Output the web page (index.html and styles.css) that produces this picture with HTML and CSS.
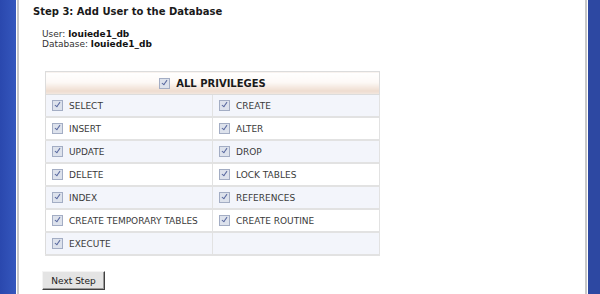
FILE: index.html
```html
<!DOCTYPE html>
<html>
<head>
<meta charset="utf-8">
<link rel="stylesheet" href="styles.css">
</head>
<body>
<div class="frame">
  <div class="side side-left"></div>
  <div class="content">
    <h1 class="title">Step 3: Add User to the Database</h1>
    <div class="info">
      <div>User: <b>louiede1_db</b></div>
      <div>Database: <b>louiede1_db</b></div>
    </div>
    <table class="privs">
      <thead>
        <tr><th colspan="2"><span class="cb"></span>ALL PRIVILEGES</th></tr>
      </thead>
      <tbody>
        <tr class="alt"><td><span class="cb"></span>SELECT</td><td><span class="cb"></span>CREATE</td></tr>
        <tr><td><span class="cb"></span>INSERT</td><td><span class="cb"></span>ALTER</td></tr>
        <tr class="alt"><td><span class="cb"></span>UPDATE</td><td><span class="cb"></span>DROP</td></tr>
        <tr><td><span class="cb"></span>DELETE</td><td><span class="cb"></span>LOCK TABLES</td></tr>
        <tr class="alt"><td><span class="cb"></span>INDEX</td><td><span class="cb"></span>REFERENCES</td></tr>
        <tr><td><span class="cb"></span>CREATE TEMPORARY TABLES</td><td><span class="cb"></span>CREATE ROUTINE</td></tr>
        <tr class="alt"><td><span class="cb"></span>EXECUTE</td><td></td></tr>
      </tbody>
    </table>
    <button class="btn" type="button">Next Step</button>
  </div>
  <div class="side side-right"></div>
</div>
</body>
</html>
```
FILE: styles.css
```css
html, body {
  margin: 0;
  padding: 0;
  background: #fff;
}
body {
  font-family: "DejaVu Sans", Verdana, sans-serif;
  color: #222;
}
.frame {
  display: flex;
  height: 294px;
  overflow: hidden;
}
.side-left {
  width: 16px;
  background: linear-gradient(to right, #2a48ae, #3557bd);
  border-right: 1px solid #fff;
}
.side-right {
  width: 12px;
  background: #2d48a2;
  border-left: 1px solid #fff;
}
.content {
  flex: 1;
  border-left: 2px solid #c8c8c8;
  border-right: 2px solid #c8c8c8;
  padding-left: 14px;
}
.title {
  margin: 5px 0 0;
  font-size: 10px;
  font-weight: bold;
  color: #1a1a1a;
  line-height: 13px;
}
.info {
  margin: 11px 0 0 9px;
  font-size: 9px;
  line-height: 10px;
  color: #333;
}
.info b { color: #111; }
.privs {
  margin: 22px 0 0 12px;
  width: 335px;
  border-collapse: collapse;
  border: 1px solid #dcdcdc;
  font-size: 9px;
  color: #3a3a3a;
}
.privs th {
  height: 22px;
  padding: 0;
  text-align: center;
  font-size: 10px;
  font-weight: bold;
  color: #1a1a1a;
  background: linear-gradient(to bottom, #fff 0%, #fdf9f6 45%, #eedccf 85%, #f3e9e2 100%);
  border-bottom: 1px solid #dcdcdc;
}
.privs td {
  height: 21px;
  padding: 0 0 0 6px;
  width: 50%;
  border-bottom: 2px solid #e2e2e2;
  border-right: 1px solid #e2e2e2;
  vertical-align: middle;
  white-space: nowrap;
}
.privs tr.alt td { background: #f3f5fb; }
.cb {
  display: inline-block;
  width: 9px;
  height: 9px;
  border: 1px solid #a3adc4;
  background: #dde2ec;
  vertical-align: -2px;
  margin-right: 6px;
  position: relative;
}
.cb::after {
  content: "";
  position: absolute;
  left: 3px;
  top: 0px;
  width: 2px;
  height: 5px;
  border: solid #5a6aa0;
  border-width: 0 1.5px 1.5px 0;
  transform: rotate(35deg);
}
.btn {
  display: block;
  margin: 15px 0 0 9px;
  width: 63px;
  height: 19px;
  padding: 0;
  font-family: "DejaVu Sans", Verdana, sans-serif;
  font-size: 9px;
  color: #222;
  background: #e4e4e4;
  border: 1px solid;
  border-color: #f4f4f4 #404040 #404040 #f4f4f4;
  box-shadow: inset -1px -1px 0 #999;
}
```
